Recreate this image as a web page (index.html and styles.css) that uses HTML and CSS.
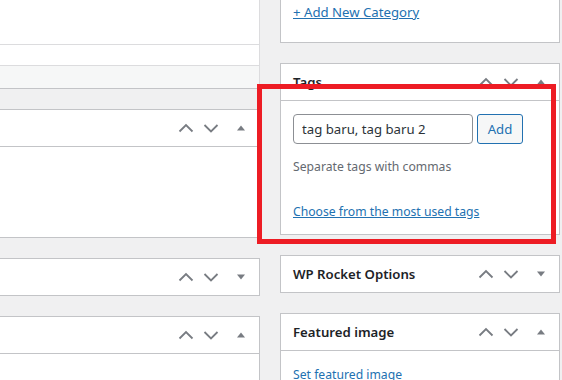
FILE: index.html
```html
<!DOCTYPE html>
<html lang="en">
<head>
    <meta charset="UTF-8">
    <meta name="viewport" content="width=device-width, initial-scale=1.0">
    <title>Edit Post</title>
    <link rel="stylesheet" href="styles.css">
</head>
<body>
    <div class="wrap">
        <div class="main">
            <div class="editor">
                <div class="editor-area"></div>
                <div class="editor-status"></div>
                <div class="editor-footer"></div>
            </div>

            <div class="postbox">
                <div class="postbox-header">
                    <h2 class="hndle"></h2>
                    <div class="handle-actions">
                        <button class="handle-order-higher"><svg width="16" height="16" viewBox="0 0 16 16"><path d="M1.5 11.5 L8 5 L14.5 11.5" /></svg></button>
                        <button class="handle-order-lower"><svg width="16" height="16" viewBox="0 0 16 16"><path d="M1.5 5 L8 11.5 L14.5 5" /></svg></button>
                        <button class="handlediv"><svg width="10" height="10" viewBox="0 0 10 10"><path class="fill" d="M1 7.5 L5 2.5 L9 7.5 Z" /></svg></button>
                    </div>
                </div>
                <div class="inside empty"></div>
            </div>

            <div class="postbox">
                <div class="postbox-header">
                    <h2 class="hndle"></h2>
                    <div class="handle-actions">
                        <button class="handle-order-higher"><svg width="16" height="16" viewBox="0 0 16 16"><path d="M1.5 11.5 L8 5 L14.5 11.5" /></svg></button>
                        <button class="handle-order-lower"><svg width="16" height="16" viewBox="0 0 16 16"><path d="M1.5 5 L8 11.5 L14.5 5" /></svg></button>
                        <button class="handlediv"><svg width="10" height="10" viewBox="0 0 10 10"><path class="fill" d="M1 2.5 L5 7.5 L9 2.5 Z" /></svg></button>
                    </div>
                </div>
            </div>

            <div class="postbox">
                <div class="postbox-header">
                    <h2 class="hndle"></h2>
                    <div class="handle-actions">
                        <button class="handle-order-higher"><svg width="16" height="16" viewBox="0 0 16 16"><path d="M1.5 11.5 L8 5 L14.5 11.5" /></svg></button>
                        <button class="handle-order-lower"><svg width="16" height="16" viewBox="0 0 16 16"><path d="M1.5 5 L8 11.5 L14.5 5" /></svg></button>
                        <button class="handlediv"><svg width="10" height="10" viewBox="0 0 10 10"><path class="fill" d="M1 7.5 L5 2.5 L9 7.5 Z" /></svg></button>
                    </div>
                </div>
                <div class="inside empty"></div>
            </div>
        </div>

        <div class="side">
            <div class="postbox categorydiv">
                <a href="#" class="add-category">+ Add New Category</a>
            </div>

            <div class="postbox">
                <div class="postbox-header">
                    <h2 class="hndle">Tags</h2>
                    <div class="handle-actions">
                        <button class="handle-order-higher"><svg width="16" height="16" viewBox="0 0 16 16"><path d="M1.5 11.5 L8 5 L14.5 11.5" /></svg></button>
                        <button class="handle-order-lower"><svg width="16" height="16" viewBox="0 0 16 16"><path d="M1.5 5 L8 11.5 L14.5 5" /></svg></button>
                        <button class="handlediv"><svg width="10" height="10" viewBox="0 0 10 10"><path class="fill" d="M1 7.5 L5 2.5 L9 7.5 Z" /></svg></button>
                    </div>
                </div>
                <div class="inside tagsdiv">
                    <div class="ajaxtag">
                        <input type="text" class="newtag" value="tag baru, tag baru 2">
                        <button class="button">Add</button>
                    </div>
                    <p class="howto">Separate tags with commas</p>
                    <a href="#" class="tagcloud-link">Choose from the most used tags</a>
                </div>
            </div>

            <div class="postbox">
                <div class="postbox-header">
                    <h2 class="hndle">WP Rocket Options</h2>
                    <div class="handle-actions">
                        <button class="handle-order-higher"><svg width="16" height="16" viewBox="0 0 16 16"><path d="M1.5 11.5 L8 5 L14.5 11.5" /></svg></button>
                        <button class="handle-order-lower"><svg width="16" height="16" viewBox="0 0 16 16"><path d="M1.5 5 L8 11.5 L14.5 5" /></svg></button>
                        <button class="handlediv"><svg width="10" height="10" viewBox="0 0 10 10"><path class="fill" d="M1 2.5 L5 7.5 L9 2.5 Z" /></svg></button>
                    </div>
                </div>
            </div>

            <div class="postbox">
                <div class="postbox-header">
                    <h2 class="hndle">Featured image</h2>
                    <div class="handle-actions">
                        <button class="handle-order-higher"><svg width="16" height="16" viewBox="0 0 16 16"><path d="M1.5 11.5 L8 5 L14.5 11.5" /></svg></button>
                        <button class="handle-order-lower"><svg width="16" height="16" viewBox="0 0 16 16"><path d="M1.5 5 L8 11.5 L14.5 5" /></svg></button>
                        <button class="handlediv"><svg width="10" height="10" viewBox="0 0 10 10"><path class="fill" d="M1 7.5 L5 2.5 L9 7.5 Z" /></svg></button>
                    </div>
                </div>
                <div class="inside featured">
                    <a href="#" class="set-thumbnail">Set featured image</a>
                </div>
            </div>
        </div>
    </div>

    <div class="highlight"></div>
</body>
</html>
```

FILE: styles.css
```css
body {
    margin: 0;
    height: 380px;
    overflow: hidden;
    background-color: #f0f0f1;
    font-family: "Noto Sans", sans-serif;
    font-size: 12.2px;
    color: #1d2327;
    position: relative;
}
a {
    color: #2271b1;
    text-decoration: underline;
}
.wrap {
    display: flex;
    align-items: flex-start;
    gap: 20px;
}
.main {
    width: 260px;
    display: flex;
    flex-direction: column;
    gap: 20px;
}
.side {
    width: 280px;
    display: flex;
    flex-direction: column;
    gap: 20px;
}

/* editor at the top of the main column */
.editor {
    background-color: #fff;
    border-right: 1px solid #dcdcde;
    border-bottom: 1px solid #c3c4c7;
}
.editor-area {
    height: 44px;
    border-bottom: 1px solid #dcdcde;
}
.editor-status {
    height: 20px;
    border-bottom: 1px solid #dcdcde;
}
.editor-footer {
    height: 22px;
    background-color: #f6f7f7;
}

/* meta boxes */
.postbox {
    background-color: #fff;
    border: 1px solid #c3c4c7;
}
.main .postbox {
    border-left: 0;
}
.postbox-header {
    display: flex;
    align-items: center;
    justify-content: space-between;
    height: 36px;
}
.postbox-header + .inside {
    border-top: 1px solid #c3c4c7;
}
.hndle {
    margin: 0;
    padding-left: 12px;
    font-size: 13.2px;
    font-weight: 600;
    line-height: 1.4;
}
.handle-actions {
    display: flex;
    height: 36px;
}
.handle-actions button {
    display: flex;
    align-items: center;
    justify-content: center;
    height: 36px;
    padding: 0;
    margin: 0;
    border: 0;
    background: none;
    color: #787c82;
    cursor: pointer;
}
.handle-order-higher,
.handle-order-lower {
    width: 25px;
}
.handlediv {
    width: 36px;
}
.handle-actions path {
    fill: none;
    stroke: currentColor;
    stroke-width: 1.8;
}
.handle-actions path.fill {
    fill: currentColor;
    stroke: none;
}
.inside.empty {
    height: 90px;
}

.categorydiv {
    border-top: 0;
    padding: 2px 12px 20px;
    line-height: 20px;
    font-size: 13.2px;
}

.tagsdiv {
    padding: 13px 12px 12px;
}
.ajaxtag {
    display: flex;
    gap: 4px;
}
.newtag {
    box-sizing: border-box;
    width: 180px;
    height: 30px;
    padding: 0 8px;
    border: 1px solid #8c8f94;
    border-radius: 4px;
    font-family: "Noto Sans", sans-serif;
    font-size: 13.2px;
    color: #2c3338;
}
.button {
    box-sizing: border-box;
    width: 46px;
    height: 30px;
    padding: 0;
    border: 1px solid #2271b1;
    border-radius: 3px;
    background-color: #f6f7f7;
    color: #2271b1;
    font-family: "Noto Sans", sans-serif;
    font-size: 13.2px;
}
.howto {
    margin: 13px 0 25px;
    line-height: 20px;
    color: #646970;
}
.tagcloud-link {
    display: block;
    line-height: 20px;
}
.featured {
    padding: 14px 12px;
    line-height: 20px;
}

/* red annotation frame drawn over the screenshot */
.highlight {
    position: absolute;
    left: 257px;
    top: 84px;
    width: 299px;
    height: 160px;
    box-sizing: border-box;
    border: 5px solid #ed1c24;
}
```
